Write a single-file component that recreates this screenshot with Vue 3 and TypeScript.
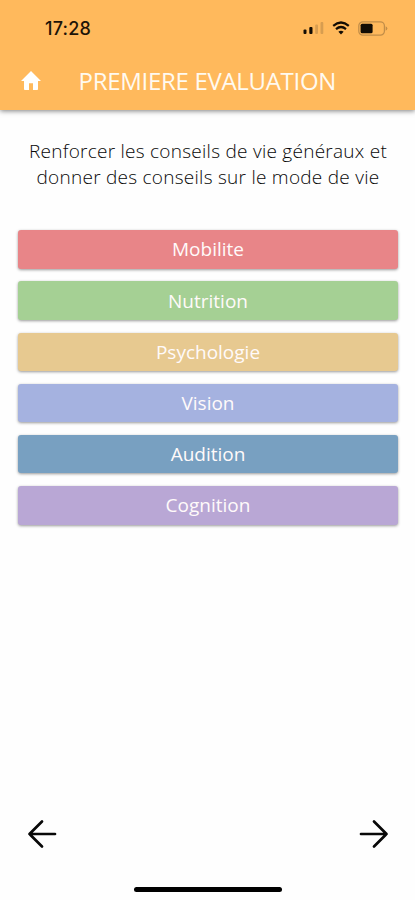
<script setup lang="ts">
interface Topic {
  label: string
  tone: string
}

const topics: Topic[] = [
  { label: 'Mobilite', tone: 'rose' },
  { label: 'Nutrition', tone: 'green' },
  { label: 'Psychologie', tone: 'sand' },
  { label: 'Vision', tone: 'periwinkle' },
  { label: 'Audition', tone: 'blue' },
  { label: 'Cognition', tone: 'violet' },
]
</script>

<template>
  <div class="screen">
    <header class="header">
      <div class="status">
        <span class="clock">17:28</span>
        <div class="indicators">
          <svg class="signal" width="21" height="14" viewBox="0 0 21 14">
            <rect x="0.5" y="8.5" width="3" height="4.5" rx="1" />
            <rect x="6.3" y="6" width="3.2" height="7" rx="1" />
            <rect class="dim" x="12.2" y="3.5" width="2.8" height="9.5" rx="1" />
            <rect class="dim" x="17.5" y="1" width="2.8" height="12" rx="1" />
          </svg>
          <svg class="wifi" width="18" height="14" viewBox="0 0 18 14">
            <path d="M1.2 4.8Q9 -1.8 16.8 4.8" />
            <path d="M4 8.1Q9 3.9 14 8.1" />
            <path class="dot" d="M6.4 10.7Q9 8.6 11.6 10.7L9 13.4Z" />
          </svg>
          <svg class="battery" width="30" height="15" viewBox="0 0 30 15">
            <rect class="shell" x="0.8" y="0.8" width="25.6" height="13.4" rx="4" />
            <rect x="2.6" y="2.8" width="12" height="9.4" rx="1.5" />
            <path class="cap" d="M27.6 5.2Q29.4 6 29.4 7.5T27.6 9.8Z" />
          </svg>
        </div>
      </div>
      <div class="toolbar">
        <svg class="home" width="20" height="19" viewBox="2 3 20 17" preserveAspectRatio="none">
          <path d="M10 20v-6h4v6h4.2q.8 0 .8-.8V12h3L12 3 2 12h3v7.2q0 .8.8.8z" />
        </svg>
        <h1 class="title">PREMIERE EVALUATION</h1>
      </div>
    </header>

    <main class="content">
      <p class="advice">
        <span>Renforcer les conseils de vie généraux et</span><br />
        <span>donner des conseils sur le mode de vie</span>
      </p>
      <div class="topics">
        <button v-for="topic in topics" :key="topic.label" class="topic" :class="topic.tone">
          {{ topic.label }}
        </button>
      </div>
    </main>

    <footer class="footer">
      <nav class="pager">
        <svg class="arrow" width="30" height="30" viewBox="0 0 30 30">
          <path d="M28 15H2.5M15 2.5L2.5 15 15 27.5" />
        </svg>
        <svg class="arrow" width="30" height="30" viewBox="0 0 30 30">
          <path d="M2 15h25.5M15 2.5L27.5 15 15 27.5" />
        </svg>
      </nav>
      <div class="home-bar"></div>
    </footer>
  </div>
</template>

<style>
body {
  margin: 0;
  background: #fefefe;
}
</style>

<style scoped>
.screen {
  display: flex;
  flex-direction: column;
  height: 900px;
  overflow: hidden;
  background: #fefefe;
  font-family: 'Open Sans', 'Noto Sans', sans-serif;
}

.header {
  box-sizing: border-box;
  height: 110px;
  flex: none;
  background: #ffb95c;
  box-shadow: 0 1px 5px rgba(0, 0, 0, 0.5);
}

.status {
  display: flex;
  align-items: center;
  justify-content: space-between;
  height: 56px;
  padding: 0 27px 0 45px;
}

.clock {
  padding-top: 2px;
  font: 500 18px/24px Inter, sans-serif;
  letter-spacing: 0.2px;
  color: #1d1408;
}

.indicators {
  display: flex;
  align-items: center;
}

.indicators svg {
  display: block;
  fill: #120c04;
}

.indicators .dim {
  fill: #d79d50;
}

.indicators .wifi {
  margin: 0 8px;
}

.wifi path {
  fill: none;
  stroke: #120c04;
  stroke-width: 2.2;
}

.wifi .dot {
  fill: #120c04;
  stroke: none;
}

.battery .shell {
  fill: none;
  stroke: #c18d48;
  stroke-width: 1.2;
}

.battery .cap {
  fill: #c18d48;
}

.toolbar {
  display: flex;
  align-items: center;
  height: 50px;
  padding-left: 20.5px;
}

.home {
  margin-bottom: 2px;
  fill: #fff;
}

.title {
  margin: 0 0 0 38px;
  font-size: 24px;
  font-weight: 400;
  line-height: 34px;
  letter-spacing: -0.3px;
  white-space: nowrap;
  color: #fffaf0;
}

.content {
  flex: 1;
  padding: 28px 17px 0 18px;
}

.advice {
  margin: 0;
  font-size: 19px;
  font-weight: 300;
  line-height: 26px;
  letter-spacing: 0.26px;
  text-align: center;
  white-space: nowrap;
  color: #080808;
}

.topics {
  display: flex;
  flex-direction: column;
  gap: 12.7px;
  margin-top: 40.2px;
}

.topic {
  height: 38.5px;
  padding: 1px 0 0;
  border: 0;
  border-radius: 3px;
  font: 400 19px/37px 'Open Sans', 'Noto Sans', sans-serif;
  color: #fffafa;
  box-shadow: 0 1px 3px rgba(0, 0, 0, 0.4);
}

.rose {
  background: #e88588;
}

.green {
  background: #a5d094;
}

.sand {
  background: #e7c990;
}

.periwinkle {
  background: #a5b2e0;
}

.blue {
  background: #78a0c1;
}

.violet {
  background: #b9a7d5;
}

.footer {
  flex: none;
  display: flex;
  flex-direction: column;
  align-items: center;
  height: 81px;
}

.pager {
  box-sizing: border-box;
  display: flex;
  justify-content: space-between;
  width: 100%;
  padding: 0 26px 0 27px;
}

.arrow {
  display: block;
  fill: none;
  stroke: #080808;
  stroke-width: 2.7;
  stroke-linecap: round;
  stroke-linejoin: round;
}

.home-bar {
  width: 148px;
  height: 5px;
  margin-top: 37.5px;
  border-radius: 3px;
  background: #000;
}
</style>
